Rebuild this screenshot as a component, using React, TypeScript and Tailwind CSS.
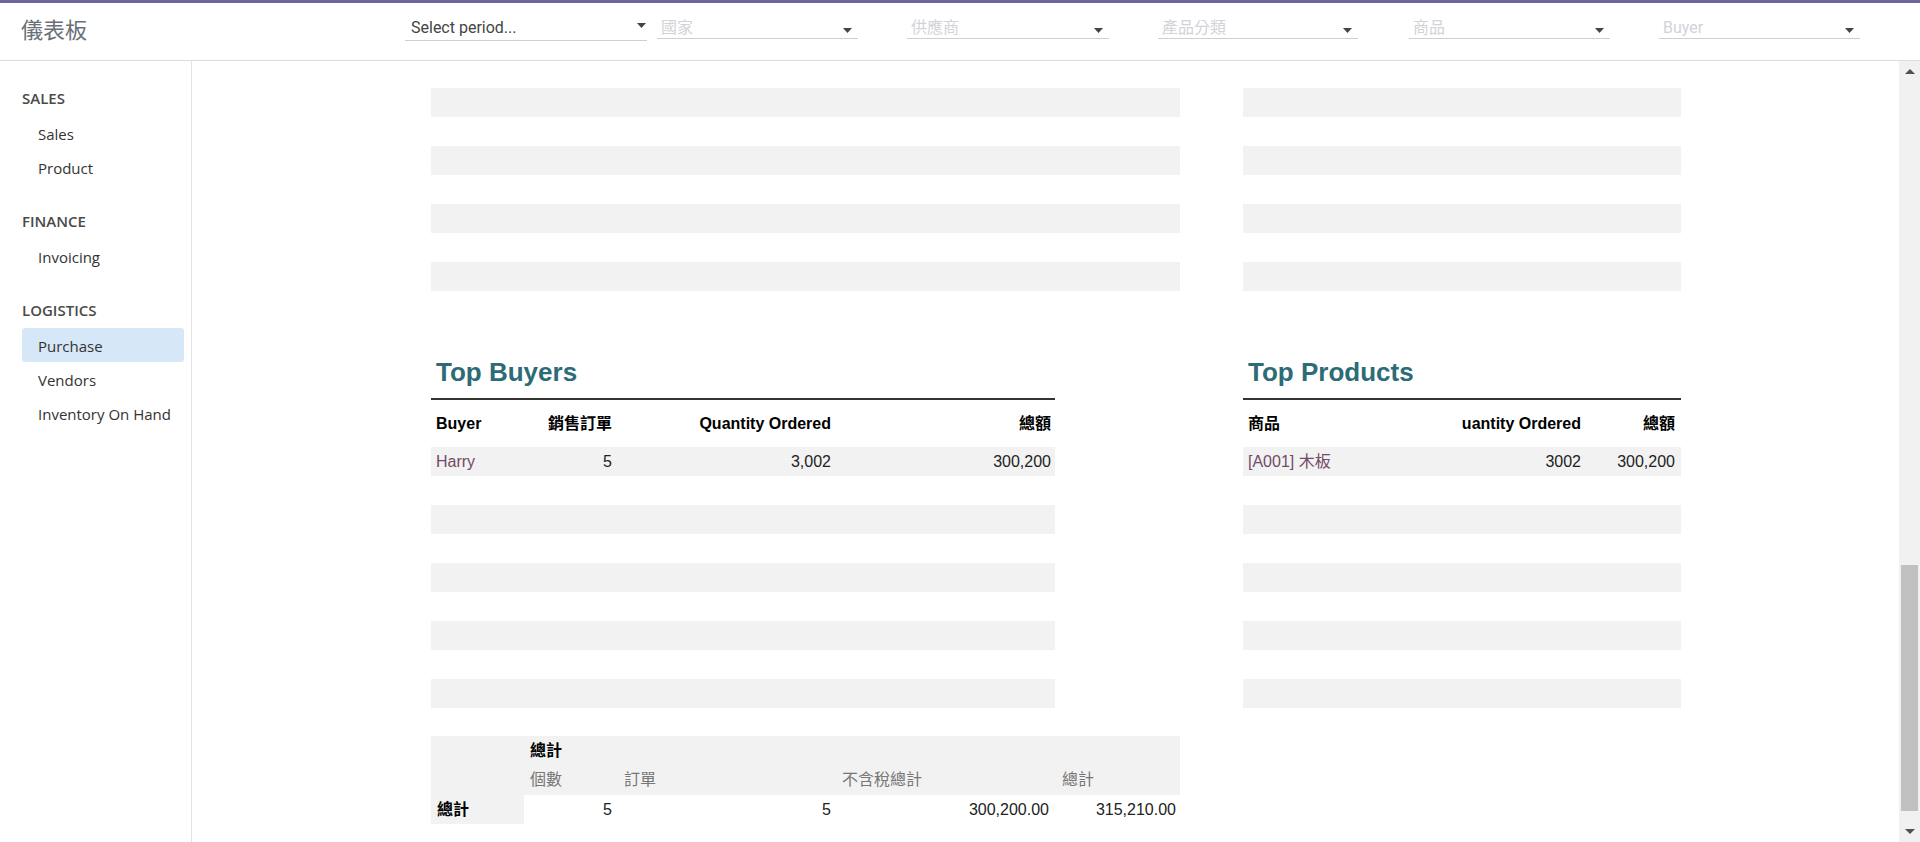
import React from "react";

const CJK = "font-['Liberation_Sans','Noto_Sans_CJK_TC',sans-serif]";

function Arrow({ className = "" }: { className?: string }) {
  return (
    <svg width="9" height="5" viewBox="0 0 9 5" className={className}>
      <polygon points="0,0 9,0 4.5,5" fill="#444" />
    </svg>
  );
}

const selects = [
  { label: "Select period...", w: "w-[242px] mr-[10px] h-[24px]", dark: true },
  { label: "國家", w: "w-[201px] mr-[49px] h-[22px]", dark: false },
  { label: "供應商", w: "w-[202px] mr-[49px] h-[22px]", dark: false },
  { label: "產品分類", w: "w-[200px] mr-[51px] h-[22px]", dark: false },
  { label: "商品", w: "w-[201px] mr-[49px] h-[22px]", dark: false },
  { label: "Buyer", w: "w-[201px] h-[22px]", dark: false },
];

function Header() {
  return (
    <div className="h-[58px] border-b border-[#dcdcdc] flex items-start shrink-0">
      <div className="w-[405px] pl-[21px] pt-[10px] text-[22px] leading-[30px] text-[#6a6f78] font-['Noto_Sans_CJK_TC',sans-serif]">
        儀表板
      </div>
      {selects.map((s) => (
        <div
          key={s.label}
          className={`${s.w} mt-[14px] border-b border-[#cfcfcf] flex justify-between items-start ${
            s.dark ? "pl-[6px] pr-[1px]" : "pl-[4px] pr-[6px]"
          }`}
        >
          <span
            className={`text-[16px] leading-[21px] font-['Roboto','Noto_Sans_CJK_TC',sans-serif] ${
              s.dark ? "text-[#444]" : "text-[#d2d2d8]"
            }`}
          >
            {s.label}
          </span>
          <Arrow className={s.dark ? "mt-[6px]" : "mt-[11px]"} />
        </div>
      ))}
    </div>
  );
}

function SideHeader({ children, className = "" }: { children: React.ReactNode; className?: string }) {
  return (
    <div className={`h-[20px] leading-[20px] text-[15px] font-semibold text-[#4a4a4a] pl-[22px] ${className}`}>
      {children}
    </div>
  );
}

function SideItem({ children, active = false }: { children: React.ReactNode; active?: boolean }) {
  return (
    <div
      className={`ml-[22px] mr-[7px] h-[34px] flex items-center pl-[16px] pt-[2px] text-[15px] text-[#333] rounded-[3px] ${
        active ? "bg-[#d6e7f7]" : ""
      }`}
    >
      {children}
    </div>
  );
}

function Sidebar() {
  return (
    <div className="w-[192px] border-r border-[#e3e3e3] shrink-0 pt-[27px] font-['Open_Sans',sans-serif]">
      <SideHeader>SALES</SideHeader>
      <div className="h-[8px]" />
      <SideItem>Sales</SideItem>
      <SideItem>Product</SideItem>
      <SideHeader className="mt-[27px]">FINANCE</SideHeader>
      <div className="h-[8px]" />
      <SideItem>Invoicing</SideItem>
      <SideHeader className="mt-[27px]">LOGISTICS</SideHeader>
      <div className="h-[8px]" />
      <SideItem active>Purchase</SideItem>
      <SideItem>Vendors</SideItem>
      <SideItem>Inventory On Hand</SideItem>
    </div>
  );
}

function TopStripes() {
  return (
    <>
      <div className="h-[27px]" />
      {[0, 1, 2, 3, 4, 5, 6].map((i) => (
        <div key={i} className={`h-[29px] ${i % 2 === 0 ? "bg-[#f2f2f2]" : ""}`} />
      ))}
      <div className="h-[66px]" />
    </>
  );
}

function EmptyRows() {
  return (
    <>
      {[0, 1, 2, 3, 4, 5, 6, 7].map((i) => (
        <div key={i} className={`h-[29px] ${i % 2 === 1 ? "bg-[#f2f2f2]" : ""}`} />
      ))}
    </>
  );
}

function Heading({ children }: { children: React.ReactNode }) {
  return (
    <div className="pl-[5px] pb-[11px] border-b-2 border-[#333] text-[26px] leading-[30px] font-bold text-[#2d6b77] font-['Liberation_Sans',sans-serif]">
      {children}
    </div>
  );
}

function LeftColumn() {
  return (
    <div className={`w-[749px] flex flex-col shrink-0 ${CJK}`}>
      <TopStripes />
      <div className="w-[624px]">
        <Heading>Top Buyers</Heading>
        <div className="grid grid-cols-[93px_93px_218px_220px] h-[47px] items-center text-[16px] font-bold text-black">
          <div className="px-[5px]">Buyer</div>
          <div className="px-[5px] text-right">銷售訂單</div>
          <div className="px-[4px] text-right">Quantity Ordered</div>
          <div className="px-[4px] text-right">總額</div>
        </div>
        <div className="grid grid-cols-[93px_93px_218px_220px] h-[29px] items-center text-[16px] bg-[#f2f2f2] text-[#222]">
          <div className="px-[5px] text-[#714b67]">Harry</div>
          <div className="px-[5px] text-right">5</div>
          <div className="px-[4px] text-right">3,002</div>
          <div className="px-[4px] text-right">300,200</div>
        </div>
        <EmptyRows />
      </div>
      <div className="h-[28px]" />
      <div className="grid grid-cols-[93px_93px_218px_220px_125px] text-[16px] text-[#222]">
        <div className="row-span-2 bg-[#f2f2f2]" />
        <div className="col-span-4 h-[29px] flex items-center bg-[#f2f2f2] pl-[6px] font-bold text-black">總計</div>
        <div className="h-[30px] flex items-center bg-[#f2f2f2] pl-[6px] text-[#777]">個數</div>
        <div className="h-[30px] flex items-center bg-[#f2f2f2] pl-[7px] text-[#777]">訂單</div>
        <div className="h-[30px] flex items-center bg-[#f2f2f2] pl-[7px] text-[#777]">不含稅總計</div>
        <div className="h-[30px] flex items-center bg-[#f2f2f2] pl-[7px] text-[#777]">總計</div>
        <div className="h-[29px] flex items-center bg-[#f2f2f2] pl-[6px] font-bold text-black">總計</div>
        <div className="h-[29px] flex items-center justify-end pr-[5px]">5</div>
        <div className="h-[29px] flex items-center justify-end pr-[4px]">5</div>
        <div className="h-[29px] flex items-center justify-end pr-[6px]">300,200.00</div>
        <div className="h-[29px] flex items-center justify-end pr-[4px]">315,210.00</div>
      </div>
    </div>
  );
}

function RightColumn() {
  return (
    <div className={`w-[438px] ml-[63px] flex flex-col shrink-0 ${CJK}`}>
      <TopStripes />
      <Heading>Top Products</Heading>
      <div className="grid grid-cols-[216px_128px_94px] h-[47px] items-center text-[16px] font-bold text-black">
        <div className="px-[5px]">商品</div>
        <div className="pr-[6px] text-right whitespace-nowrap">uantity Ordered</div>
        <div className="px-[6px] text-right">總額</div>
      </div>
      <div className="grid grid-cols-[216px_128px_94px] h-[29px] items-center text-[16px] bg-[#f2f2f2] text-[#222]">
        <div className="px-[5px] text-[#714b67]">[A001] 木板</div>
        <div className="px-[6px] text-right">3002</div>
        <div className="px-[6px] text-right">300,200</div>
      </div>
      <EmptyRows />
    </div>
  );
}

function ScrollBar() {
  return (
    <div className="w-[21px] shrink-0 bg-[#f1f1f1] flex flex-col">
      <div className="h-[21px] flex items-center justify-center">
        <svg width="10" height="5" viewBox="0 0 10 5">
          <polygon points="0,5 10,5 5,0" fill="#505050" />
        </svg>
      </div>
      <div className="flex-1 flex flex-col px-[2px]">
        <div className="mt-[483px] h-[246px] bg-[#c1c1c1]" />
      </div>
      <div className="h-[21px] flex items-center justify-center">
        <svg width="10" height="5" viewBox="0 0 10 5">
          <polygon points="0,0 10,0 5,5" fill="#505050" />
        </svg>
      </div>
    </div>
  );
}

export default function App() {
  return (
    <div className="w-[1920px] h-[842px] overflow-hidden flex flex-col bg-white">
      <div className="h-[3px] bg-[#71639e] shrink-0" />
      <Header />
      <div className="flex flex-1 min-h-0">
        <Sidebar />
        <div className="flex-1 flex pl-[239px] overflow-hidden">
          <LeftColumn />
          <RightColumn />
        </div>
        <ScrollBar />
      </div>
    </div>
  );
}
